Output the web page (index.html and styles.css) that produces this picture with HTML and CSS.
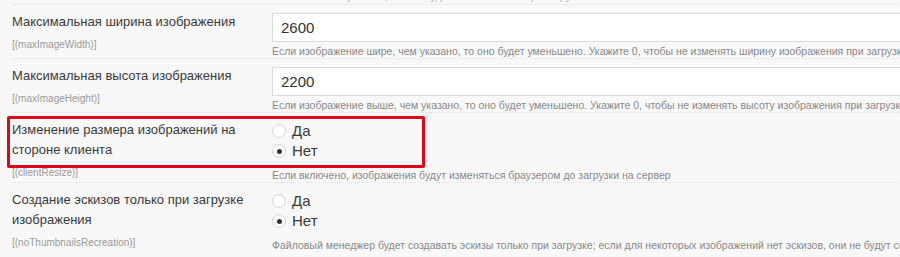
FILE: index.html
```html
<!DOCTYPE html>
<html lang="ru">
<head>
<meta charset="utf-8">
<link rel="stylesheet" href="styles.css">
</head>
<body>
<div class="form">
  <div class="prev-help">Если значение указано, то оно будет использовано при загрузке</div>
  <div class="row">
    <div class="label-col">
      <div class="label">Максимальная ширина изображения</div>
      <div class="key">[(maxImageWidth)]</div>
    </div>
    <div class="field-col">
      <div class="input">2600</div>
      <div class="help">Если изображение шире, чем указано, то оно будет уменьшено. Укажите 0, чтобы не изменять ширину изображения при загрузке на сервер</div>
    </div>
  </div>
  <div class="row">
    <div class="label-col">
      <div class="label">Максимальная высота изображения</div>
      <div class="key">[(maxImageHeight)]</div>
    </div>
    <div class="field-col">
      <div class="input">2200</div>
      <div class="help">Если изображение выше, чем указано, то оно будет уменьшено. Укажите 0, чтобы не изменять высоту изображения при загрузке на сервер</div>
    </div>
  </div>
  <div class="row row-highlight">
    <div class="label-col">
      <div class="label">Изменение размера изображений на стороне клиента</div>
      <div class="key">[(clientResize)]</div>
    </div>
    <div class="field-col">
      <div class="radios">
        <label class="radio"><span class="dot"></span>Да</label>
        <label class="radio"><span class="dot checked"></span>Нет</label>
      </div>
      <div class="help">Если включено, изображения будут изменяться браузером до загрузки на сервер</div>
    </div>
    <div class="highlight"></div>
  </div>
  <div class="row">
    <div class="label-col">
      <div class="label">Создание эскизов только при загрузке изображения</div>
      <div class="key">[(noThumbnailsRecreation)]</div>
    </div>
    <div class="field-col">
      <div class="radios">
        <label class="radio"><span class="dot"></span>Да</label>
        <label class="radio"><span class="dot checked"></span>Нет</label>
      </div>
      <div class="help">Файловый менеджер будет создавать эскизы только при загрузке; если для некоторых изображений нет эскизов, они не будут созданы</div>
    </div>
  </div>
</div>
</body>
</html>
```

FILE: styles.css
```css
html, body {
  margin: 0;
  padding: 0;
  background: #f8f8f8;
  overflow: hidden;
}
body {
  font-family: "Liberation Sans", Arial, sans-serif;
  color: #333;
  width: 900px;
  height: 257px;
}
.form {
  margin-top: -8px;
  padding-left: 12px;
}
.prev-help {
  padding-left: 260px;
  font-size: 10.5px;
  line-height: 8px;
  color: #aaa;
  white-space: nowrap;
  height: 12px;
  overflow: hidden;
}
.row {
  position: relative;
  display: grid;
  grid-template-columns: 260px 1fr;
  border-top: 1px dotted #e2e2e2;
  padding: 8px 0 0;
}
.label {
  font-size: 13px;
  line-height: 20px;
  color: #3a3a3a;
  width: 245px;
  margin-top: -1px;
}
.key {
  font-size: 10px;
  line-height: 14px;
  color: #999;
  margin-top: 6px;
}
.field-col {
  min-width: 0;
}
.input {
  box-sizing: border-box;
  height: 29px;
  width: 700px;
  background: #fff;
  border: 1px solid #dcdcdc;
  font-size: 15px;
  line-height: 27px;
  padding-left: 8px;
  color: #333;
}
.help {
  font-size: 10.5px;
  line-height: 14px;
  color: #888;
  margin-top: 2px;
  white-space: nowrap;
}
.radios {
  display: flex;
  flex-direction: column;
  margin-bottom: 7px;
}
.radio {
  display: flex;
  align-items: center;
  font-size: 15px;
  line-height: 20px;
  color: #3a3a3a;
}
.dot {
  box-sizing: border-box;
  width: 14px;
  height: 14px;
  border-radius: 50%;
  border: 1px solid #d6d6d6;
  background: #fff;
  box-shadow: inset 0 1px 2px rgba(0,0,0,0.06);
  margin-right: 6px;
  position: relative;
}
.dot.checked::after {
  content: "";
  position: absolute;
  left: 3.5px;
  top: 3.5px;
  width: 5px;
  height: 5px;
  border-radius: 50%;
  background: #333;
}
.highlight {
  position: absolute;
  left: -5px;
  top: 3px;
  width: 418px;
  height: 52px;
  box-sizing: border-box;
  border: 3px solid #e0061a;
  border-radius: 2px;
  pointer-events: none;
}
```
